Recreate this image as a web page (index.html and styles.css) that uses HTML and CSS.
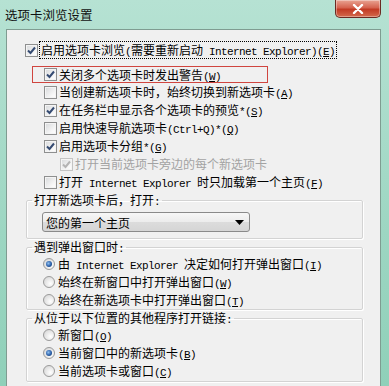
FILE: index.html
```html
<!DOCTYPE html>
<html lang="zh-CN">
<head>
    <meta charset="UTF-8">
    <title>选项卡浏览设置</title>
    <link rel="stylesheet" href="styles.css">
</head>
<body>
    <div class="window">
        <div class="titlebar">
            <span class="title">选项卡浏览设置</span>
            <div class="close">
                <svg width="12" height="10" viewBox="0 0 12 10"><path d="M2 1 L10 9 M10 1 L2 9" stroke="#fff" stroke-width="2.4" stroke-linecap="round"/></svg>
            </div>
        </div>

        <div class="client">
            <div class="row top">
                <span class="cb checked"></span>
                <span class="label focus">启用选项卡浏览<span class="m">(</span>需要重新启动<span class="m"> Internet Explorer)(<u>E</u>)</span></span>
            </div>

            <div class="opts">
                <div class="row marked">
                    <span class="cb checked"></span>
                    <span class="label">关闭多个选项卡时发出警告<span class="m">(<u>W</u>)</span></span>
                </div>
                <div class="row">
                    <span class="cb"></span>
                    <span class="label">当创建新选项卡时，始终切换到新选项卡<span class="m">(<u>A</u>)</span></span>
                </div>
                <div class="row">
                    <span class="cb checked"></span>
                    <span class="label">在任务栏中显示各个选项卡的预览<span class="m">*(<u>S</u>)</span></span>
                </div>
                <div class="row">
                    <span class="cb"></span>
                    <span class="label">启用快速导航选项卡<span class="m">(Ctrl+Q)*(<u>Q</u>)</span></span>
                </div>
                <div class="row">
                    <span class="cb checked"></span>
                    <span class="label">启用选项卡分组<span class="m">*(<u>G</u>)</span></span>
                </div>
                <div class="row indent disabled">
                    <span class="cb checked"></span>
                    <span class="label">打开当前选项卡旁边的每个新选项卡</span>
                </div>
                <div class="row">
                    <span class="cb"></span>
                    <span class="label">打开<span class="m"> Internet Explorer </span>时只加载第一个主页<span class="m">(<u>F</u>)</span></span>
                </div>
            </div>

            <fieldset class="group first">
                <legend>打开新选项卡后，打开<span class="m">:</span></legend>
                <div class="select">
                    <span>您的第一个主页</span>
                    <svg class="arrow" width="9" height="5" viewBox="0 0 9 5"><path d="M0 0 H9 L4.5 5 Z" fill="#000"/></svg>
                </div>
            </fieldset>

            <fieldset class="group">
                <legend>遇到弹出窗口时<span class="m">:</span></legend>
                <div class="row radio-row">
                    <span class="rb on"></span>
                    <span class="label">由<span class="m"> Internet Explorer </span>决定如何打开弹出窗口<span class="m">(<u>I</u>)</span></span>
                </div>
                <div class="row radio-row">
                    <span class="rb"></span>
                    <span class="label">始终在新窗口中打开弹出窗口<span class="m">(<u>W</u>)</span></span>
                </div>
                <div class="row radio-row">
                    <span class="rb"></span>
                    <span class="label">始终在新选项卡中打开弹出窗口<span class="m">(<u>T</u>)</span></span>
                </div>
            </fieldset>

            <fieldset class="group last">
                <legend>从位于以下位置的其他程序打开链接<span class="m">:</span></legend>
                <div class="row radio-row">
                    <span class="rb"></span>
                    <span class="label">新窗口<span class="m">(<u>O</u>)</span></span>
                </div>
                <div class="row radio-row">
                    <span class="rb on"></span>
                    <span class="label">当前窗口中的新选项卡<span class="m">(<u>B</u>)</span></span>
                </div>
                <div class="row radio-row">
                    <span class="rb"></span>
                    <span class="label">当前选项卡或窗口<span class="m">(<u>C</u>)</span></span>
                </div>
            </fieldset>
        </div>
    </div>
</body>
</html>
```

FILE: styles.css
```css
/* Window frame (aero style, teal glass) */
body {
    margin: 0;
    width: 389px;
    height: 386px;
    overflow: hidden;
    background: linear-gradient(to bottom, #b6e2d3, #9dd6c2 60%, #8fd0b9);
    font-family: "Noto Sans CJK SC", sans-serif;
    font-size: 12px;
    color: #000;
}

.window {
    height: 386px;
    display: flex;
    flex-direction: column;
}

.titlebar {
    height: 29px;
    display: flex;
    align-items: flex-start;
    padding-left: 5px;
    flex-shrink: 0;
}

.title {
    margin-top: 6px;
    font-size: 12.5px;
    line-height: 18px;
    color: #111;
}

.close {
    margin-left: auto;
    margin-right: 8px;
    width: 46px;
    height: 18px;
    box-sizing: border-box;
    border: 1px solid #6b2a22;
    border-top: none;
    border-radius: 0 0 5px 5px;
    background: linear-gradient(to bottom, #e9a493, #d5634f 45%, #c23a24 55%, #d36a4d);
    box-shadow: inset 0 0 0 1px rgba(255, 255, 255, 0.35);
    display: flex;
    align-items: center;
    justify-content: center;
}

/* Dialog client area */
.client {
    flex: 1;
    margin: 0 8px 0 6px;
    background: #f0f0f0;
    border: 1px solid #7f9c91;
    border-bottom: none;
    padding-top: 11px;
}

.row {
    display: flex;
    align-items: center;
    height: 18px;
    white-space: nowrap;
}

.row.top {
    margin-left: 18px;
}

.opts {
    margin-left: 37px;
}

.row.marked {
    margin: 7px 0 0 -12px;
    width: 236px;
    height: 17px;
    box-sizing: border-box;
    border: 1px solid #d0453f;
    padding-left: 11px;
}

.row.indent {
    margin-left: 16px;
}

.disabled .label {
    color: #a3a3a3;
}

.label {
    line-height: 16px;
}

.label.focus {
    outline: 1px dotted #000;
    padding: 0 1px;
}

/* ASCII runs render like SimSun: 6px per character */
.m {
    font-family: "Liberation Mono", monospace;
    font-size: 11px;
    letter-spacing: -0.6px;
    line-height: 1;
}

u {
    text-underline-offset: 1px;
}

/* Checkbox */
.cb {
    width: 13px;
    height: 13px;
    box-sizing: border-box;
    border: 1px solid #8e8f8f;
    background: linear-gradient(135deg, #d6d8da, #f7f7f7 70%, #fff);
    box-shadow: inset 0 0 0 1px #f4f4f4;
    margin-right: 2px;
    flex-shrink: 0;
    position: relative;
}

.cb.checked::after {
    content: "";
    position: absolute;
    left: 1px;
    top: 1px;
    width: 9px;
    height: 9px;
    background: url("data:image/svg+xml;utf8,<svg xmlns='http://www.w3.org/2000/svg' width='9' height='9' viewBox='0 0 9 9'><path d='M1 4.5 L3.5 7 L8 1.5' fill='none' stroke='%23354b72' stroke-width='2'/></svg>");
}

.disabled .cb {
    border-color: #c4c4c4;
}

.disabled .cb.checked::after {
    background: url("data:image/svg+xml;utf8,<svg xmlns='http://www.w3.org/2000/svg' width='9' height='9' viewBox='0 0 9 9'><path d='M1 4.5 L3.5 7 L8 1.5' fill='none' stroke='%23b4b4b4' stroke-width='2'/></svg>");
}

/* Radio button */
.rb {
    width: 12px;
    height: 12px;
    box-sizing: border-box;
    border: 1px solid #9a9a9a;
    border-radius: 50%;
    background: radial-gradient(circle at 65% 65%, #ffffff, #dedede 70%, #cfcfcf);
    margin-right: 3px;
    flex-shrink: 0;
    position: relative;
}

.rb.on::after {
    content: "";
    position: absolute;
    left: 2px;
    top: 2px;
    width: 6px;
    height: 6px;
    border-radius: 50%;
    background: radial-gradient(circle at 40% 40%, #8fc0ef, #2a5ea8 55%, #13345f);
}

.radio-row {
    margin-left: 16px;
}

/* Group boxes */
.group {
    margin: 1px 17px 0 19px;
    padding: 0;
    border: 1px solid #d3d3d3;
    border-radius: 2px;
    box-shadow: 1px 1px 0 #ffffff, inset 1px 1px 0 #ffffff;
    min-width: 0;
}

.group legend {
    margin-left: 5px;
    padding: 0 2px;
    height: 16px;
    line-height: 16px;
}

.group.first {
    padding-bottom: 6px;
}

.group + .group {
    margin-top: 0;
}

.group.last {
    padding-bottom: 1px;
}

/* Drop-down */
.select {
    margin: 4px 0 0 15px;
    width: 208px;
    height: 20px;
    box-sizing: border-box;
    border: 1px solid #8a8a8a;
    border-radius: 3px;
    background: linear-gradient(to bottom, #f7f7f7, #ececec 50%, #dcdcdc 51%, #d5d5d5);
    display: flex;
    align-items: center;
    padding-left: 3px;
}

.select .arrow {
    margin-left: auto;
    margin-right: 5px;
}
```
